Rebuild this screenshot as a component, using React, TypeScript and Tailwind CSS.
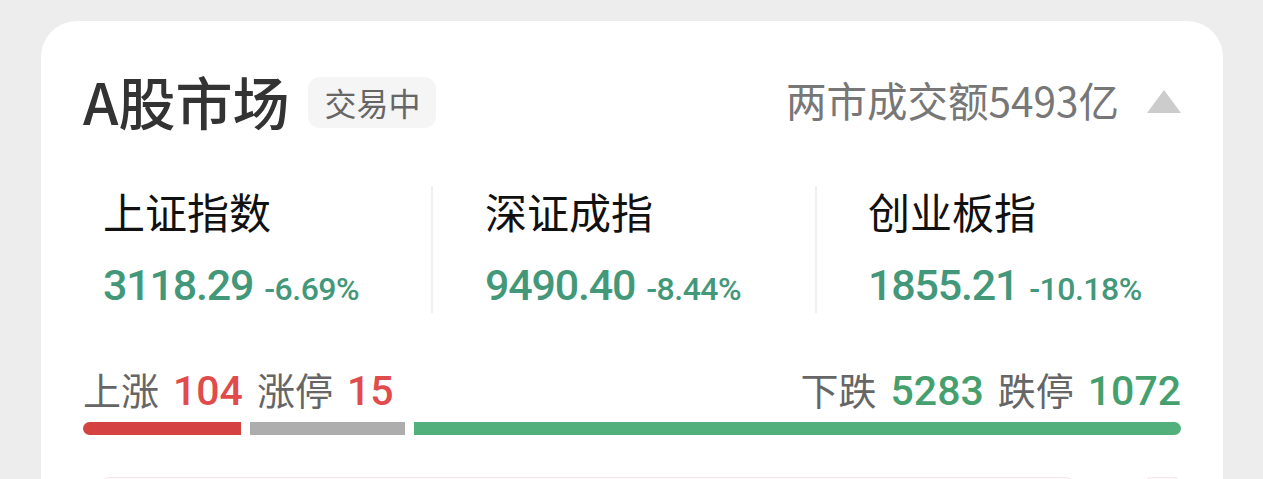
import React from "react";

const CJK = { fontFamily: '"Noto Sans CJK SC", "Noto Sans", sans-serif' };
const NUM = { fontFamily: 'Roboto, "Noto Sans", sans-serif' };

function IndexCol({
  name,
  value,
  pct,
  className,
}: {
  name: string;
  value: string;
  pct: string;
  className: string;
}) {
  return (
    <div className={className}>
      <div className="mt-[4px] text-[42px] leading-none text-[#111]" style={CJK}>
        {name}
      </div>
      <div className="mt-[32px] flex items-baseline gap-[11px] text-[#43987a]" style={NUM}>
        <span className="text-[43px] leading-none font-medium tracking-[-1.2px]">{value}</span>
        <span className="text-[32px] leading-none font-medium tracking-[-0.5px]">{pct}</span>
      </div>
    </div>
  );
}

export default function App() {
  return (
    <div className="min-h-[479px] w-full bg-[#ededed] pt-[21px] pl-[41px] overflow-hidden">
      <div className="w-[1182px] rounded-[36px] bg-white px-[42px] pt-[51px] pb-[40px]">
        {/* header */}
        <div className="flex h-[56px] items-center justify-between">
          <div className="flex items-center">
            <span className="text-[57px] leading-none font-medium text-[#333]" style={CJK}>
              A股市场
            </span>
            <span
              className="ml-[19px] mt-[4px] flex h-[51px] w-[128px] items-center justify-center rounded-[12px] bg-[#f5f5f5] text-[32px] leading-none text-[#666]"
              style={CJK}
            >
              交易中
            </span>
          </div>
          <div className="flex items-center">
            <span className="text-[40.5px] leading-none text-[#777]" style={CJK}>
              两市成交额5493亿
            </span>
            <svg className="ml-[28px] mt-[2px]" width="34" height="23" viewBox="0 0 34 23">
              <polygon points="17,0 34,23 0,23" fill="#cccccc" />
            </svg>
          </div>
        </div>

        {/* indices */}
        <div className="mt-[58px] flex h-[127px]">
          <IndexCol
            className="w-[350px] pl-[20px] border-r-2 border-[#f0f0f0]"
            name="上证指数"
            value="3118.29"
            pct="-6.69%"
          />
          <IndexCol
            className="w-[384px] pl-[52px] border-r-2 border-[#f0f0f0]"
            name="深证成指"
            value="9490.40"
            pct="-8.44%"
          />
          <IndexCol className="flex-1 pl-[51px]" name="创业板指" value="1855.21" pct="-10.18%" />
        </div>

        {/* up / down stats */}
        <div className="mt-[57px] flex items-baseline justify-between">
          <div className="flex items-baseline text-[38px] leading-none">
            <span className="text-[#666]" style={CJK}>上涨</span>
            <span className="ml-[14px] text-[41px] font-medium text-[#e04c4c]" style={NUM}>104</span>
            <span className="ml-[14px] text-[#666]" style={CJK}>涨停</span>
            <span className="ml-[14px] text-[41px] font-medium text-[#e04c4c]" style={NUM}>15</span>
          </div>
          <div className="flex items-baseline text-[38px] leading-none">
            <span className="text-[#666]" style={CJK}>下跌</span>
            <span className="ml-[14px] text-[41px] font-medium text-[#45a06e]" style={NUM}>5283</span>
            <span className="ml-[14px] text-[#666]" style={CJK}>跌停</span>
            <span className="ml-[14px] text-[41px] font-medium text-[#45a06e]" style={NUM}>1072</span>
          </div>
        </div>

        {/* ratio bar */}
        <div className="mt-[10px] flex h-[13px] gap-[9px]">
          <div className="w-[158px] rounded-l-full bg-[#d44242]" />
          <div className="w-[155px] bg-[#adadad]" />
          <div className="flex-1 rounded-r-full bg-[#52b07d]" />
        </div>

        {/* next row (cut off) */}
        <div className="mt-[42px] flex gap-[64px] pl-[12px]">
          <div className="h-[80px] flex-1 rounded-t-[16px] border-t border-[#f5e4e8] bg-[#fffafb]" />
          <div className="h-[80px] w-[37px] rounded-t-[8px] border-t border-[#f5e4e8] bg-[#fffafb]" />
        </div>
      </div>
    </div>
  );
}
